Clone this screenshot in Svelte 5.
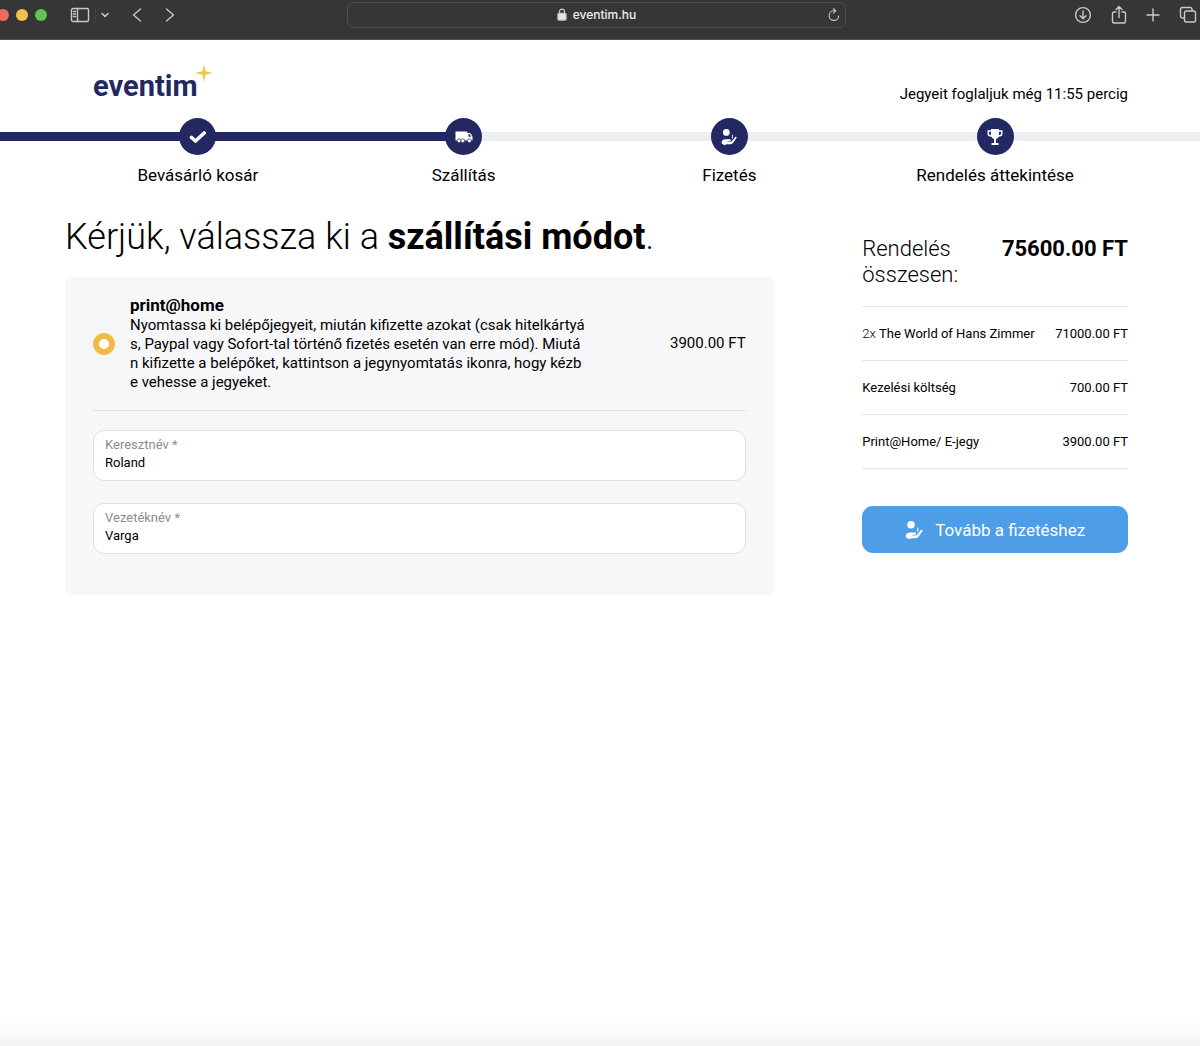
<script>
  const steps = [
    { label: 'Bevásárló kosár', icon: 'check' },
    { label: 'Szállítás', icon: 'truck' },
    { label: 'Fizetés', icon: 'pay' },
    { label: 'Rendelés áttekintése', icon: 'cup' }
  ];
  const items = [
    { count: '2x', name: 'The World of Hans Zimmer', price: '71000.00 FT' },
    { count: '', name: 'Kezelési költség', price: '700.00 FT' },
    { count: '', name: 'Print@Home/ E-jegy', price: '3900.00 FT' }
  ];
  let method = $state('print');
  let firstName = $state('Roland');
  let lastName = $state('Varga');
</script>

{#snippet payIcon()}
  <svg class="pay" viewBox="0 0 18 20" width="18" height="20" aria-hidden="true">
    <circle cx="6" cy="4.8" r="3.8" fill="currentColor" />
    <path
      d="M.8 17.200v-1.900c.6-2 2-2.900 4-2.900h4.900c1 0 1.500.5 1.500 1.200s-.5 1.100-1.300 1.100H7.300v.7h3.200c1 0 1.700-.5 2.100-1.300l3.300-4c.4-.5 1-.6 1.400-.2.400.3.400.8.1 1.300l-3.700 5.400c-.7 1-1.600 1.600-2.800 1.600H6.200L4 19.200l-3.200-2z"
      fill="currentColor"
    />
    <path d="M12.300 7.500h1v3.800l-1 1z" fill="currentColor" />
  </svg>
{/snippet}

<div class="window">
  <header class="toolbar">
    <div class="side">
      <div class="lights"><i class="red"></i><i class="yellow"></i><i class="green"></i></div>
      <button class="sidebar" aria-label="Oldalsáv">
        <svg width="20" height="16" viewBox="0 0 20 16">
          <rect x="1.5" y="1.5" width="17" height="13" rx="1.5" />
          <path d="M7.5 1.5v13M3.5 4.5h2M3.5 7h2M3.5 9.5h2" />
        </svg>
      </button>
      <button class="drop" aria-label="Lapcsoportok">
        <svg width="8" height="6" viewBox="0 0 8 6"><path d="M1 1.5 4 4.5l3-3" stroke-width="1.6" /></svg>
      </button>
      <button class="back" aria-label="Vissza">
        <svg width="10" height="16" viewBox="0 0 10 16"><path d="M8.5 2 1.500 8l7 6" /></svg>
      </button>
      <button class="next" aria-label="Előre">
        <svg width="10" height="16" viewBox="0 0 10 16"><path d="M1.500 2l7 6-7 6" /></svg>
      </button>
    </div>
    <div class="address">
      <span></span>
      <span class="host">
        <svg width="10" height="13" viewBox="0 0 10 13">
          <path d="M2.500 6V3.800a2.500 2.700 0 0 1 5 0V6" stroke-width="1.2" />
          <rect x="1" y="5.500" width="8" height="6.500" rx="1" fill="#e6e6e6" />
        </svg>
        eventim.hu
      </span>
      <button class="reload" aria-label="Újratöltés">
        <svg width="12" height="14" viewBox="0 0 12 14">
          <path d="M10.700 8a4.800 4.800 0 1 1-4.700-5.200h1.500M5.500.7l2.300 2.200-2.300 2.300" stroke-width="1.1" />
        </svg>
      </button>
    </div>
    <div class="side actions">
      <button aria-label="Letöltések">
        <svg width="18" height="18" viewBox="0 0 18 18">
          <circle cx="9" cy="9" r="7.400" />
          <path d="M9 5v7.500M6 9.700l3 3 3-3" />
        </svg>
      </button>
      <button aria-label="Megosztás">
        <svg width="16" height="20" viewBox="0 0 16 20">
          <path d="M5 7H3a1.500 1.500 0 0 0-1.500 1.500v8A1.500 1.500 0 0 0 3 18h10a1.500 1.500 0 0 0 1.500-1.500v-8A1.500 1.500 0 0 0 13 7h-2M8 12.500V2M5 4.500l3-3 3 3" />
        </svg>
      </button>
      <button aria-label="Új lap">
        <svg width="14" height="14" viewBox="0 0 14 14"><path d="M7 1v12M1 7h12" /></svg>
      </button>
      <button aria-label="Lapok áttekintése">
        <svg width="18" height="18" viewBox="0 0 18 18">
          <rect x="5.500" y="5" width="11" height="11" rx="1.800" />
          <path d="M5.500 12H3.500a2 2 0 0 1-2-2V3.500a2 2 0 0 1 2-2H11a2 2 0 0 1 2 2V5" />
        </svg>
      </button>
    </div>
  </header>

  <div class="brandbar">
    <a class="logo" href="/" aria-label="eventim">
      <span>eventim</span>
      <svg width="18" height="18" viewBox="0 0 18 18" aria-hidden="true">
        <path d="M9 0 10.500 7.300 18 9l-7.500 1.700L9 18l-1.500-7.300L0 9l7.500-1.700z" fill="#f3c649" />
      </svg>
    </a>
    <p class="timer">Jegyeit foglaljuk még 11:55 percig</p>
  </div>

  <nav class="progress" aria-label="Rendelés lépései">
    <ol>
      {#each steps as step}
        <li>
          <span class="dot">
            {#if step.icon === 'check'}
              <svg width="18" height="14" viewBox="0 0 18 14"><path d="M2.500 7.500 6.500 11 15.200 3" fill="none" stroke="#fff" stroke-width="3.600" stroke-linecap="round" stroke-linejoin="round" /></svg>
            {:else if step.icon === 'truck'}
              <svg width="18" height="14" viewBox="0 0 18 14">
                <path d="M.5 1.500h11.800v9H.5z" fill="#fff" />
                <path d="M12 3h2.800c1 .4 2.300 2.500 2.700 3.700v3.800H12z" fill="#fff" />
                <path d="M13.500 4.200h1.300l1.400 2.500h-2.700z" fill="#232863" />
                <g fill="#fff" stroke="#232863" stroke-width=".7">
                  <circle cx="4" cy="10.800" r="2" /><circle cx="7.800" cy="10.800" r="2" /><circle cx="14.300" cy="10.800" r="2" />
                </g>
              </svg>
            {:else if step.icon === 'pay'}
              {@render payIcon()}
            {:else}
              <svg width="16" height="18" viewBox="0 0 16 18">
                <path d="M4 1h8v6.500c0 1.500-1.300 3-3 3.400v4h2.500V17h-7v-2.100H7v-4C5.300 10.500 4 9 4 7.500z" fill="#fff" />
                <path d="M4 3H1.200v2.500C1.200 7 2.500 8 4.500 8M12 3h2.800v2.500c0 1.500-1.300 2.500-3.300 2.500" fill="none" stroke="#fff" stroke-width="1.400" />
              </svg>
            {/if}
          </span>
          <span class="label">{step.label}</span>
        </li>
      {/each}
    </ol>
  </nav>

  <main>
    <section class="delivery">
      <h1>Kérjük, válassza ki a <strong>szállítási módot</strong>.</h1>
      <form class="card" id="delivery">
        <label class="method">
          <input type="radio" name="method" value="print" bind:group={method} />
          <span class="info">
            <strong>print@home</strong>
            <span>Nyomtassa ki belépőjegyeit, miután kifizette azokat (csak hitelkártyás, Paypal vagy Sofort-tal történő fizetés esetén van erre mód). Miután kifizette a belépőket, kattintson a jegynyomtatás ikonra, hogy kézbe vehesse a jegyeket.</span>
          </span>
          <span class="price">3900.00 FT</span>
        </label>
        <div class="field">
          <label for="first">Keresztnév *</label>
          <input id="first" type="text" bind:value={firstName} />
        </div>
        <div class="field">
          <label for="last">Vezetéknév *</label>
          <input id="last" type="text" bind:value={lastName} />
        </div>
      </form>
    </section>

    <aside>
      <div class="total">
        <h2>Rendelés összesen:</h2>
        <strong>75600.00 FT</strong>
      </div>
      <ul>
        {#each items as item}
          <li>
            <span>{#if item.count}<span class="count">{item.count}</span>&nbsp;{/if}{item.name}</span>
            <span>{item.price}</span>
          </li>
        {/each}
      </ul>
      <button class="submit" type="submit" form="delivery">
        {@render payIcon()}
        Tovább a fizetéshez
      </button>
    </aside>
  </main>
</div>

<style>
  :global(body) {
    margin: 0;
    background: #fff;
  }
  .window {
    min-height: 100vh;
    font-family: Roboto, 'Liberation Sans', sans-serif;
    color: #000;
    overflow-x: hidden;
    background: linear-gradient(to top, #f2f2f2, #fafafa 12px, #fff 32px);
  }
  .window * {
    box-sizing: border-box;
  }
  h1,
  h2,
  p,
  ol,
  ul {
    margin: 0;
    padding: 0;
    list-style: none;
  }
  button {
    border: 0;
    background: none;
    padding: 0;
    font: inherit;
    color: inherit;
  }
  svg {
    display: block;
  }

  .toolbar {
    height: 40px;
    padding-bottom: 10px;
    background: #363636;
    border-bottom: 1px solid #505050;
    display: grid;
    grid-template-columns: 347px 1fr 354px;
    align-items: center;
  }
  .toolbar svg {
    fill: none;
    stroke: #c9c9c9;
    stroke-width: 1.4;
    stroke-linecap: round;
    stroke-linejoin: round;
  }
  .side {
    display: flex;
    align-items: center;
  }
  .lights {
    display: flex;
    gap: 7px;
    margin-left: -3px;
  }
  .lights i {
    width: 12px;
    height: 12px;
    border-radius: 50%;
  }
  .red {
    background: #ed6b5f;
  }
  .yellow {
    background: #f5bf4f;
  }
  .green {
    background: #61c554;
  }
  .sidebar {
    margin-left: 23px;
    padding-right: 5px;
    border-right: 1px solid #434343;
  }
  .drop {
    margin-left: 5px;
  }
  .back {
    margin-left: 23px;
  }
  .next {
    margin-left: 23px;
  }
  .address {
    height: 26px;
    border: 1px solid #4d4d4d;
    border-radius: 7px;
    display: grid;
    grid-template-columns: 1fr auto 1fr;
    align-items: center;
    padding: 0 5px;
  }
  .host {
    display: flex;
    align-items: center;
    gap: 6px;
    font: 500 12px/16px Inter, sans-serif;
    color: #efefef;
  }
  .reload {
    justify-self: end;
  }
  .actions {
    justify-content: flex-end;
    gap: 19px;
    padding-right: 3px;
  }

  .brandbar {
    display: flex;
    justify-content: space-between;
    align-items: flex-end;
    height: 64px;
    padding: 0 72px 0 93px;
  }
  .logo {
    display: flex;
    align-items: flex-start;
    color: #232863;
    text-decoration: none;
    font: 700 29px/36px Roboto, sans-serif;
  }
  .logo svg {
    margin: -4px 0 0 -3px;
  }
  .timer {
    font-size: 15px;
    line-height: 20px;
  }

  .progress {
    margin-top: 14px;
    padding: 0 72px 0 65px;
    background:
      linear-gradient(#232863, #232863) 0 14px / calc(65px + (100% - 137px) * 0.375) 9px no-repeat,
      linear-gradient(#eceef1, #eceef1) 0 14px / 100% 9px no-repeat;
  }
  ol {
    display: grid;
    grid-template-columns: repeat(4, 1fr);
  }
  ol li {
    display: flex;
    flex-direction: column;
    align-items: center;
    gap: 8px;
  }
  .dot {
    width: 37px;
    height: 37px;
    border-radius: 50%;
    background: #232863;
    color: #fff;
    display: grid;
    place-items: center;
  }
  .dot .pay {
    width: 16px;
    height: 18px;
  }
  .label {
    font-size: 17px;
    line-height: 24px;
  }

  main {
    display: grid;
    grid-template-columns: repeat(12, 1fr);
    padding: 0 72px 0 65px;
    margin-top: 26px;
  }
  .delivery {
    grid-column: 1 / 9;
  }
  aside {
    grid-column: 10 / 13;
    padding-top: 23px;
  }
  h1 {
    font-weight: 300;
    font-size: 36px;
    line-height: 48px;
  }
  h1 strong {
    font-weight: 700;
  }
  .card {
    margin-top: 16px;
    padding: 18px 28px 41px;
    background: #f7f7f9;
    border-radius: 4px;
  }
  .method {
    display: flex;
    align-items: center;
    padding-bottom: 18px;
    border-bottom: 1px solid #e2e2e4;
    font-size: 15px;
    line-height: 19px;
  }
  .method input {
    appearance: none;
    flex: none;
    width: 22px;
    height: 22px;
    margin: 0 15px 0 0;
    border-radius: 50%;
    background: #fff;
    border: 6px solid #f0bc42;
  }
  .info {
    flex: 0 1 455px;
    word-break: break-all;
  }
  .info strong {
    display: block;
    font-size: 17px;
    line-height: 21px;
    font-weight: 700;
  }
  .info span {
    display: block;
  }
  .price {
    margin-left: auto;
    white-space: nowrap;
  }
  .field {
    margin-top: 19px;
    height: 51px;
    padding: 5px 11px;
    display: flex;
    flex-direction: column;
    background: #fff;
    border: 1px solid #dfdfe2;
    border-radius: 11px;
  }
  .field + .field {
    margin-top: 22px;
  }
  .field label {
    font-size: 13px;
    line-height: 17px;
    color: #8b8b8b;
  }
  .field input {
    border: 0;
    padding: 0;
    outline: 0;
    background: none;
    font: 400 13px/20px Roboto, sans-serif;
    color: #000;
  }

  .total {
    display: flex;
    justify-content: space-between;
    gap: 16px;
    padding-bottom: 18px;
    border-bottom: 1px solid #e2e3e8;
    font-size: 22px;
    line-height: 26px;
  }
  .total h2 {
    flex: 0 1 110px;
    font: inherit;
    font-weight: 300;
  }
  .total strong {
    font-weight: 700;
    white-space: nowrap;
  }
  ul li {
    display: flex;
    justify-content: space-between;
    padding: 18px 0 17px;
    border-bottom: 1px solid #e2e3e8;
    font-size: 13px;
    line-height: 18px;
    white-space: nowrap;
  }
  .count {
    font-weight: 300;
  }
  .submit {
    margin-top: 37px;
    width: 100%;
    height: 47px;
    border-radius: 11px;
    background: #4d9de7;
    color: #fff;
    display: flex;
    align-items: center;
    justify-content: center;
    gap: 12px;
    font-size: 17px;
    line-height: 24px;
  }
</style>
